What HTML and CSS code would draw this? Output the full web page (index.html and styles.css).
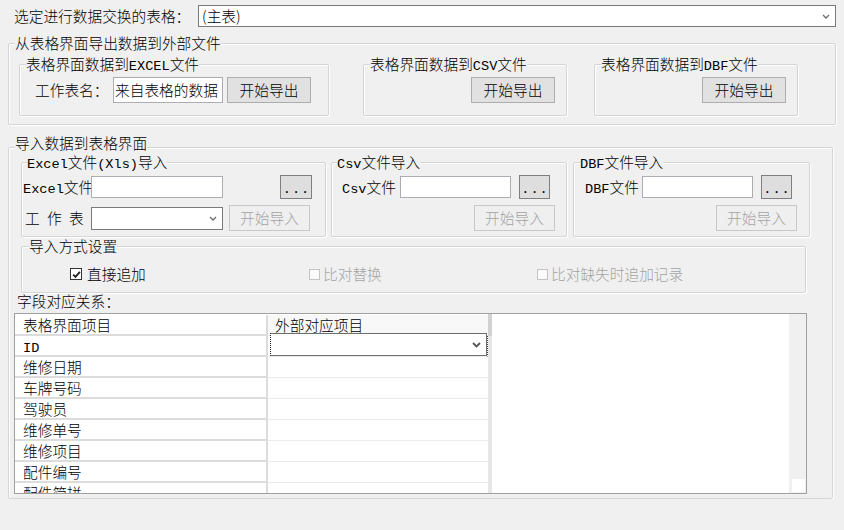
FILE: index.html
```html
<!DOCTYPE html>
<html lang="zh-CN">
<head>
    <meta charset="UTF-8">
    <meta name="viewport" content="width=device-width, initial-scale=1.0">
    <title>数据交换</title>
    <link rel="stylesheet" href="styles.css">
</head>
<body>
    <!-- 选择表格 -->
    <div class="top-row">
        <span class="top-label">选定进行数据交换的表格：</span>
        <div class="combo table-pick">
            <span>(主表)</span>
            <svg class="chev" width="8" height="5" viewBox="0 0 8 5"><path d="M1 1l3 3 3-3" fill="none" stroke="#6a6a6a" stroke-width="1.3"/></svg>
        </div>
    </div>

    <!-- 导出 -->
    <div class="group export-box">
        <div class="cap">从表格界面导出数据到外部文件</div>
        <div class="export-row">
            <div class="group out-excel">
                <div class="cap">表格界面数据到<span class="lat">EXCEL</span>文件</div>
                <div class="line">
                    <span class="lbl sheet-lbl">工作表名：</span>
                    <div class="field sheet-field">来自表格的数据</div>
                    <button class="btn export-btn">开始导出</button>
                </div>
            </div>
            <div class="group out-csv">
                <div class="cap">表格界面数据到<span class="lat">CSV</span>文件</div>
                <div class="line to-right">
                    <button class="btn export-btn">开始导出</button>
                </div>
            </div>
            <div class="group out-dbf">
                <div class="cap">表格界面数据到<span class="lat">DBF</span>文件</div>
                <div class="line to-right">
                    <button class="btn export-btn">开始导出</button>
                </div>
            </div>
        </div>
    </div>

    <!-- 导入 -->
    <div class="group import-box">
        <div class="cap cap-high">导入数据到表格界面</div>
        <div class="import-row">
            <div class="group in-excel">
                <div class="cap cap-near"><span class="lat">Excel</span>文件<span class="lat">(Xls)</span>导入</div>
                <div class="line pick-line">
                    <span class="lbl"><span class="lat">Excel</span>文件</span>
                    <div class="field file-field"></div>
                    <button class="btn dots"><span class="lat">...</span></button>
                </div>
                <div class="line act-line">
                    <span class="lbl spaced">工作表</span>
                    <div class="combo sheet-combo">
                        <span></span>
                        <svg class="chev" width="8" height="5" viewBox="0 0 8 5"><path d="M1 1l3 3 3-3" fill="none" stroke="#6a6a6a" stroke-width="1.3"/></svg>
                    </div>
                    <button class="btn import-btn" disabled>开始导入</button>
                </div>
            </div>
            <div class="group in-csv">
                <div class="cap cap-near"><span class="lat">Csv</span>文件导入</div>
                <div class="line pick-line">
                    <span class="lbl"><span class="lat">Csv</span>文件</span>
                    <div class="field file-field"></div>
                    <button class="btn dots"><span class="lat">...</span></button>
                </div>
                <div class="line act-line to-right">
                    <button class="btn import-btn" disabled>开始导入</button>
                </div>
            </div>
            <div class="group in-dbf">
                <div class="cap"><span class="lat">DBF</span>文件导入</div>
                <div class="line pick-line">
                    <span class="lbl"><span class="lat">DBF</span>文件</span>
                    <div class="field file-field"></div>
                    <button class="btn dots"><span class="lat">...</span></button>
                </div>
                <div class="line act-line to-right">
                    <button class="btn import-btn" disabled>开始导入</button>
                </div>
            </div>
        </div>

        <div class="group mode-box">
            <div class="cap cap-wide">导入方式设置</div>
            <div class="check-row">
                <label class="check check-1">
                    <span class="box on"><svg width="9" height="9" viewBox="0 0 9 9"><path d="M1.2 4.6l2.3 2.3 4.4-5" fill="none" stroke="#222" stroke-width="1.8"/></svg></span>
                    直接追加
                </label>
                <label class="check check-2 off">
                    <span class="box"></span>
                    比对替换
                </label>
                <label class="check check-3 off">
                    <span class="box"></span>
                    比对缺失时追加记录
                </label>
            </div>
        </div>

        <div class="map-label">字段对应关系：</div>

        <!-- 字段对应表 -->
        <div class="grid">
            <div class="grid-table">
                <div class="tr head"><div class="c1">表格界面项目</div><div class="c2">外部对应项目</div></div>
                <div class="tr">
                    <div class="c1"><span class="lat">ID</span></div>
                    <div class="c2 editing">
                        <div class="combo cell-combo">
                            <span></span>
                            <svg class="chev" width="9" height="6" viewBox="0 0 9 6"><path d="M1 1l3.5 3.5L8 1" fill="none" stroke="#555" stroke-width="1.8"/></svg>
                        </div>
                    </div>
                </div>
                <div class="tr"><div class="c1">维修日期</div><div class="c2"></div></div>
                <div class="tr"><div class="c1">车牌号码</div><div class="c2"></div></div>
                <div class="tr"><div class="c1">驾驶员</div><div class="c2"></div></div>
                <div class="tr"><div class="c1">维修单号</div><div class="c2"></div></div>
                <div class="tr"><div class="c1">维修项目</div><div class="c2"></div></div>
                <div class="tr"><div class="c1">配件编号</div><div class="c2"></div></div>
                <div class="tr"><div class="c1">配件简拼</div><div class="c2"></div></div>
            </div>
            <div class="splitter"></div>
            <div class="blank"></div>
            <div class="vscroll"><div class="corner"></div></div>
        </div>
    </div>
</body>
</html>
```

FILE: styles.css
```css
/* 通用样式 */
* {
    box-sizing: border-box;
}

body {
    margin: 0;
    padding-top: 5px;
    background-color: #f0f0f0;
    color: #000;
    font-family: "Noto Sans CJK SC", sans-serif;
    font-size: 14.7px;
    font-weight: 300;
    line-height: 16px;
}

/* 西文字符，行高压低避免撑高行框 */
.lat {
    font-family: "Liberation Mono", "Noto Sans CJK SC", monospace;
    font-size: 13.6px;
    font-weight: 400;
    line-height: 10px;
}

/* 顶部选择 */
.top-row {
    display: flex;
    align-items: center;
    height: 22px;
    margin-left: 14px;
}

.top-label {
    width: 184px;
    line-height: 22px;
}

.combo {
    display: flex;
    align-items: center;
    justify-content: space-between;
    background-color: #fff;
    border: 1px solid #7a7a7a;
}

.table-pick {
    width: 638px;
    height: 22px;
    padding: 0 5px 0 3px;
}

.chev {
    display: block;
}

/* 分组框 */
.group {
    border: 1px solid #d5d5d5;
    border-radius: 2px;
    box-shadow: inset 1px 1px 0 #fff, 1px 1px 0 #fff;
}

.cap {
    width: max-content;
    height: 16px;
    margin: -9px 0 0 6px;
    background-color: #f0f0f0;
    line-height: 16px;
}

.cap-high {
    margin-top: -13px;
}

.cap-near {
    margin-left: 5px;
}

.cap-wide {
    margin-left: 7px;
}

.line {
    display: flex;
    align-items: center;
}

.to-right {
    justify-content: flex-end;
}

.lbl {
    flex-shrink: 0;
    white-space: nowrap;
}

.field {
    background-color: #fff;
    border: 1px solid #abadb3;
    overflow: hidden;
    white-space: nowrap;
}

.btn {
    flex-shrink: 0;
    padding: 0;
    font: inherit;
    color: #000;
    background-color: #e1e1e1;
    border: 1px solid #adadad;
    border-radius: 0;
}

.btn:disabled {
    color: #a3a3a3;
    background-color: #efefef;
    border-color: #c8c8c8;
}

/* 导出区域 */
.export-box {
    width: 828px;
    height: 82px;
    margin: 16px 0 0 8px;
}

.export-row {
    display: flex;
    margin: 13px 0 0 10px;
}

.export-row .group {
    height: 52px;
}

.export-row .line {
    height: 26px;
    margin-top: 5px;
}

.out-excel {
    width: 310px;
}

.out-excel .line {
    padding-left: 15px;
}

.out-csv {
    width: 204px;
    margin-left: 34px;
}

.out-dbf {
    width: 204px;
    margin-left: 27px;
}

.out-csv .line,
.out-dbf .line {
    padding-right: 11px;
}

.sheet-lbl {
    width: 78px;
}

.sheet-field {
    width: 110px;
    height: 26px;
    padding-left: 1px;
    line-height: 24px;
}

.export-btn {
    width: 84px;
    height: 26px;
}

.sheet-field + .export-btn {
    margin-left: 4px;
}

/* 导入区域 */
.import-box {
    width: 825px;
    height: 352px;
    margin: 22px 0 0 8px;
}

.import-row {
    display: flex;
    margin: 11px 0 0 12px;
}

.import-row .group {
    height: 75px;
}

.in-excel {
    width: 305px;
}

.in-csv {
    width: 236px;
    margin-left: 5px;
}

.in-dbf {
    width: 237px;
    margin-left: 6px;
}

.pick-line {
    height: 24px;
    margin-top: 5px;
}

.act-line {
    height: 26px;
    margin-top: 6px;
}

.file-field {
    height: 22px;
}

.dots {
    height: 24px;
    border-color: #7f7f7f;
    background-color: #dedede;
    line-height: 14px;
}

.dots .lat {
    letter-spacing: 1px;
    padding-left: 1px;
}

.import-btn {
    width: 81px;
    height: 26px;
}

.in-excel .pick-line {
    padding-left: 1px;
}

.in-excel .pick-line .lbl {
    width: 68px;
}

.in-excel .file-field {
    width: 132px;
}

.in-excel .dots {
    width: 32px;
    margin-left: 57px;
}

.in-excel .act-line {
    padding-left: 3px;
}

.spaced {
    width: 66px;
    letter-spacing: 7.3px;
}

.sheet-combo {
    width: 132px;
    height: 23px;
    padding-right: 5px;
}

.sheet-combo + .import-btn {
    margin-left: 6px;
}

.in-csv .pick-line {
    padding-left: 10px;
}

.in-csv .pick-line .lbl {
    width: 58px;
}

.in-dbf .pick-line {
    padding-left: 11px;
}

.in-dbf .pick-line .lbl {
    width: 57px;
}

.in-csv .file-field,
.in-dbf .file-field {
    width: 111px;
}

.in-csv .dots,
.in-dbf .dots {
    width: 31px;
    margin-left: 8px;
}

.in-csv .act-line {
    padding-right: 11px;
}

.in-dbf .act-line {
    padding-right: 12px;
}

/* 导入方式 */
.mode-box {
    width: 785px;
    height: 47px;
    margin: 9px 0 0 12px;
}

.check-row {
    display: flex;
    margin-top: 12px;
    padding-left: 48px;
}

.check {
    display: flex;
    align-items: center;
    line-height: 16px;
}

.check-1 {
    width: 239px;
}

.check-2 {
    width: 228px;
}

.box {
    display: flex;
    align-items: center;
    justify-content: center;
    width: 12px;
    height: 12px;
    margin-right: 5px;
    background-color: #fff;
    border: 1px solid #333;
}

.check.off {
    color: #a3a3a3;
}

.check.off .box {
    width: 11px;
    height: 11px;
    margin-right: 3px;
    border-color: #c4c4c4;
    background-color: #fbfbfb;
}

.map-label {
    margin-left: 8px;
    line-height: 16px;
}

/* 字段对应表 */
.grid {
    display: flex;
    width: 793px;
    height: 181px;
    margin: 4px 0 0 5px;
    border: 1px solid #a0a0a0;
    background-color: #fff;
}

.grid-table {
    width: 473px;
    padding-top: 1px;
    overflow: hidden;
}

.tr {
    display: flex;
    height: 21px;
}

.c1 {
    width: 253px;
    padding-left: 8px;
    line-height: 19px;
    border-right: 2px solid #dcdcdc;
    border-bottom: 2px solid #dcdcdc;
    white-space: nowrap;
}

.c2 {
    width: 220px;
    padding-left: 7px;
    line-height: 20px;
    border-bottom: 1px solid #ebebeb;
}

.head .c2 {
    background-color: #f8f8f8;
}

.c2.editing {
    padding-left: 2px;
    border-right: 1px dotted #444;
}

.cell-combo {
    width: 217px;
    height: 23px;
    margin-top: -3px;
    padding-right: 5px;
    border-color: #6e6e6e;
    border-left: 1px dotted #222;
}

.splitter {
    width: 4px;
    background: linear-gradient(#d2d2d2 0 22px, #e6e6e6 22px);
}

.blank {
    flex: 1;
}

.vscroll {
    display: flex;
    flex-direction: column;
    justify-content: flex-end;
    width: 17px;
    padding: 0 1px 1px 3px;
    background-color: #f0f0f0;
}

.corner {
    width: 13px;
    height: 13px;
    background-color: #fff;
}
```
